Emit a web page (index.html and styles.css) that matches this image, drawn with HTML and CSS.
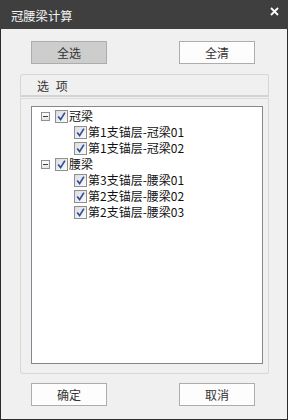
FILE: index.html
```html
<!DOCTYPE html>
<html lang="zh">
<head>
<meta charset="utf-8">
<title>冠腰梁计算</title>
<link rel="stylesheet" href="styles.css">
</head>
<body>
<div class="win">
  <div class="titlebar">
    <span class="title">冠腰梁计算</span>
    <svg class="close" width="9" height="9" viewBox="0 0 9 9"><path d="M1 1 L8 8 M8 1 L1 8" stroke="#fff" stroke-width="1.8" fill="none"/></svg>
  </div>
  <div class="btnrow top">
    <button class="btn pressed">全选</button>
    <button class="btn">全清</button>
  </div>
  <div class="group">
    <div class="group-head">选 项</div>
    <div class="group-body">
      <div class="tree">
        <div class="row">
          <span class="exp"></span><span class="cb"><svg width="11" height="11" viewBox="0 0 11 11"><path d="M2.2 5.5 L4.6 8.6 L8.9 1.6" stroke="#2f4d9e" stroke-width="1.7" fill="none"/></svg></span><span class="lbl">冠梁</span>
        </div>
        <div class="row child">
          <span class="cb"><svg width="11" height="11" viewBox="0 0 11 11"><path d="M2.2 5.5 L4.6 8.6 L8.9 1.6" stroke="#2f4d9e" stroke-width="1.7" fill="none"/></svg></span><span class="lbl">第1支锚层-冠梁01</span>
        </div>
        <div class="row child">
          <span class="cb"><svg width="11" height="11" viewBox="0 0 11 11"><path d="M2.2 5.5 L4.6 8.6 L8.9 1.6" stroke="#2f4d9e" stroke-width="1.7" fill="none"/></svg></span><span class="lbl">第1支锚层-冠梁02</span>
        </div>
        <div class="row">
          <span class="exp"></span><span class="cb"><svg width="11" height="11" viewBox="0 0 11 11"><path d="M2.2 5.5 L4.6 8.6 L8.9 1.6" stroke="#2f4d9e" stroke-width="1.7" fill="none"/></svg></span><span class="lbl">腰梁</span>
        </div>
        <div class="row child">
          <span class="cb"><svg width="11" height="11" viewBox="0 0 11 11"><path d="M2.2 5.5 L4.6 8.6 L8.9 1.6" stroke="#2f4d9e" stroke-width="1.7" fill="none"/></svg></span><span class="lbl">第3支锚层-腰梁01</span>
        </div>
        <div class="row child">
          <span class="cb"><svg width="11" height="11" viewBox="0 0 11 11"><path d="M2.2 5.5 L4.6 8.6 L8.9 1.6" stroke="#2f4d9e" stroke-width="1.7" fill="none"/></svg></span><span class="lbl">第2支锚层-腰梁02</span>
        </div>
        <div class="row child">
          <span class="cb"><svg width="11" height="11" viewBox="0 0 11 11"><path d="M2.2 5.5 L4.6 8.6 L8.9 1.6" stroke="#2f4d9e" stroke-width="1.7" fill="none"/></svg></span><span class="lbl">第2支锚层-腰梁03</span>
        </div>
      </div>
    </div>
  </div>
  <div class="btnrow bottom">
    <button class="btn">确定</button>
    <button class="btn">取消</button>
  </div>
</div>
</body>
</html>
```

FILE: styles.css
```css
html, body {
  margin: 0;
  padding: 0;
  background: #f0f0f0;
}
body {
  font-family: "Noto Sans CJK SC", "Noto Sans", sans-serif;
  font-size: 12px;
}
.win {
  width: 288px;
  height: 420px;
  box-sizing: border-box;
  border: 1px solid #2b2b2b;
  border-top: none;
  background: #f0f0f0;
  display: flex;
  flex-direction: column;
}
.titlebar {
  height: 29px;
  flex: none;
  background: #3f3f3f;
  display: flex;
  align-items: center;
  justify-content: space-between;
  padding: 0 9px 0 11px;
  margin: 0 -1px;
}
.title {
  color: #f4f4f4;
  font-size: 12.3px;
  line-height: 16px;
  margin-top: 2px;
}
.close {
  display: block;
  margin-top: -7px;
}
.btnrow {
  display: flex;
  justify-content: space-between;
  padding: 0 32px 0 30px;
}
.btnrow.top {
  margin-top: 12px;
}
.btnrow.bottom {
  margin-top: 9px;
}
.btn {
  width: 76px;
  height: 23px;
  box-sizing: border-box;
  border: 1px solid #adadad;
  background: #fdfdfd;
  font-family: inherit;
  font-size: 12px;
  color: #333;
  padding: 0;
  margin: 0;
  line-height: 20px;
}
.btn.pressed {
  background: #cdcdcd;
}
.group {
  margin: 10px 0 0 19px;
  width: 249px;
  display: flex;
  flex-direction: column;
}
.group-head {
  height: 23px;
  box-sizing: border-box;
  border: 1px solid #d6d6d6;
  border-bottom: 2px solid #d3d3d3;
  border-radius: 3px 3px 0 0;
  padding-left: 16px;
  line-height: 21px;
  color: #333;
  letter-spacing: 2px;
}
.group-body {
  margin-top: 1px;
  height: 276px;
  box-sizing: border-box;
  border: 1px solid #d8d8d8;
  border-top-color: #dcdcdc;
  border-radius: 0 0 3px 3px;
  padding: 7px 5px 9px 10px;
  display: flex;
}
.tree {
  flex: 1;
  background: #fff;
  border: 1px solid #828790;
  padding-top: 1px;
}
.row {
  height: 16px;
  display: flex;
  align-items: center;
  padding-left: 9px;
  color: #111;
  white-space: nowrap;
}
.row.child {
  padding-left: 42px;
}
.exp {
  width: 9px;
  height: 9px;
  box-sizing: border-box;
  border: 1px solid #919191;
  background: linear-gradient(#ffffff, #e6e6e6);
  position: relative;
  margin-right: 5px;
}
.exp::after {
  content: "";
  position: absolute;
  left: 1px;
  right: 1px;
  top: 3px;
  height: 1px;
  background: #404040;
}
.cb {
  width: 13px;
  height: 13px;
  box-sizing: border-box;
  border: 1px solid #8e8f8f;
  background: linear-gradient(135deg, #dcdcdc, #fbfbfb);
  display: flex;
  align-items: center;
  justify-content: center;
  margin-right: 1px;
}
.cb svg {
  display: block;
}
.lbl {
  line-height: 16px;
  font-size: 12px;
}
```
